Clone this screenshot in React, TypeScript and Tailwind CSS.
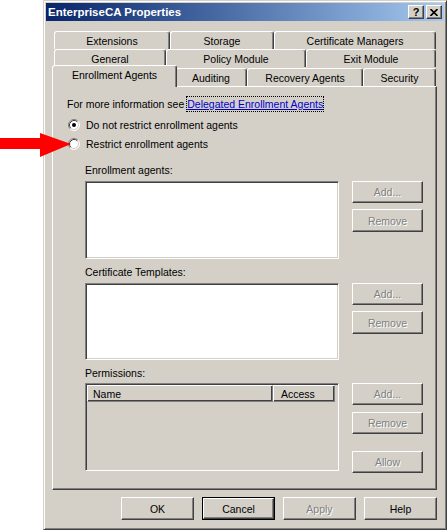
import React from "react";

const raised =
  "bg-[#d4d0c8] border border-t-white border-l-white border-r-[#404040] border-b-[#404040] shadow-[inset_-1px_-1px_0_#808080]";
const sunken =
  "border border-t-[#808080] border-l-[#808080] border-r-white border-b-white shadow-[inset_1px_1px_0_#404040,inset_-1px_-1px_0_#d4d0c8]";
const disabledText = "text-[#808080] [text-shadow:1px_1px_0_#ffffff]";

function Btn({
  children,
  disabled,
  className,
}: {
  children: React.ReactNode;
  disabled?: boolean;
  className: string;
}) {
  return (
    <div className={`${raised} ${className} flex items-center justify-center`}>
      <span className={disabled ? disabledText : "text-black"}>{children}</span>
    </div>
  );
}

function Radio({ checked }: { checked?: boolean }) {
  return (
    <svg width="12" height="12" viewBox="0 0 12 12" className="shrink-0">
      <circle cx="6" cy="6" r="5" fill="#ffffff" />
      <path d="M2.11 9.89 A5.5 5.5 0 0 1 9.89 2.11" fill="none" stroke="#808080" strokeWidth="1" />
      <path d="M9.89 2.11 A5.5 5.5 0 0 1 2.11 9.89" fill="none" stroke="#ffffff" strokeWidth="1" />
      <path d="M2.82 9.18 A4.5 4.5 0 0 1 9.18 2.82" fill="none" stroke="#404040" strokeWidth="1" />
      <path d="M9.18 2.82 A4.5 4.5 0 0 1 2.82 9.18" fill="none" stroke="#d4d0c8" strokeWidth="1" />
      {checked && <circle cx="6" cy="6" r="2" fill="#000000" />}
    </svg>
  );
}

function Tab({ className, children }: { className: string; children: React.ReactNode }) {
  return (
    <div
      className={`${className} h-[18px] flex items-center justify-center border-t border-l border-r border-t-white border-l-white border-r-[#404040] rounded-t-[3px] shadow-[inset_-1px_0_0_#808080] bg-[#d4d0c8]`}
    >
      {children}
    </div>
  );
}

export default function App() {
  return (
    <div className="relative w-[447px] h-[530px] bg-white overflow-hidden flex font-['Liberation_Sans',Arial,sans-serif] text-[10.5px] leading-[14px] text-black">
      {/* Window */}
      <div className="ml-[43px] w-[404px] h-[530px] bg-[#d4d0c8] border border-t-[#d4d0c8] border-l-[#d4d0c8] border-r-[#404040] border-b-[#404040] shadow-[inset_1px_1px_0_#ffffff,inset_-1px_-1px_0_#808080] p-[2px] flex flex-col">
        {/* Title bar */}
        <div className="h-[18px] bg-linear-to-r from-[#0a246a] to-[#a6caf0] flex items-center pl-[2px] pr-[2px]">
          <span className="text-white font-bold text-[11.5px] leading-[14px] flex-1">EnterpriseCA Properties</span>
          <div className={`${raised} w-[16px] h-[14px] flex items-center justify-center`}>
            <span className="font-bold text-[11px] leading-[11px] text-black">?</span>
          </div>
          <div className={`${raised} w-[16px] h-[14px] ml-[2px] flex items-center justify-center`}>
            <svg width="8" height="7" viewBox="0 0 8 7">
              <path d="M0.5 0 L7.5 7 M7.5 0 L0.5 7" stroke="#000" strokeWidth="1.6" />
            </svg>
          </div>
        </div>

        {/* Tabs */}
        <div className="ml-[6px] mt-[10px] w-[385px] flex flex-col">
          <div className="flex pl-[2px]">
            <Tab className="w-[116px]">Extensions</Tab>
            <Tab className="w-[104px]">Storage</Tab>
            <Tab className="w-[162px]">Certificate Managers</Tab>
          </div>
          <div className="flex pl-[2px]">
            <Tab className="w-[112px]">General</Tab>
            <Tab className="w-[140px]">Policy Module</Tab>
            <Tab className="w-[130px]">Exit Module</Tab>
          </div>
          <div className="flex items-end h-[19px]">
            <div className="relative z-10 w-[125px] h-[22px] -mr-[2px] -mb-[1px] bg-[#d4d0c8] border-t border-l border-r border-t-white border-l-white border-r-[#404040] rounded-t-[3px] shadow-[inset_-1px_0_0_#808080] flex justify-center pt-[2px]">
              Enrollment Agents
            </div>
            <Tab className="w-[72px]">Auditing</Tab>
            <Tab className="w-[116px]">Recovery Agents</Tab>
            <Tab className="w-[73px]">Security</Tab>
          </div>

          {/* Panel */}
          <div className={`${raised} w-[385px] h-[404px] flex flex-col`}>
            <div className="ml-[14px] mt-[10px] h-[14px] flex items-center">
              <span>For more information see&nbsp;</span>
              <span className="text-[#0000cc] underline outline outline-1 outline-dotted outline-black">
                Delegated Enrollment Agents
              </span>
            </div>
            <div className="ml-[15px] mt-[7px] h-[14px] flex items-center gap-[6px]">
              <Radio checked />
              <span>Do not restrict enrollment agents</span>
            </div>
            <div className="ml-[15px] mt-[5px] h-[14px] flex items-center gap-[6px]">
              <Radio />
              <span>Restrict enrollment agents</span>
            </div>

            <div className="ml-[32px] mt-[12px] h-[14px]">Enrollment agents:</div>
            <div className="ml-[32px] mt-[4px] flex">
              <div className={`${sunken} w-[254px] h-[78px] bg-white`} />
              <div className="ml-[13px] flex flex-col">
                <Btn disabled className="w-[71px] h-[22px]">Add...</Btn>
                <Btn disabled className="w-[71px] h-[23px] mt-[6px]">Remove</Btn>
              </div>
            </div>

            <div className="ml-[32px] mt-[6px] h-[14px]">Certificate Templates:</div>
            <div className="ml-[32px] mt-[4px] flex">
              <div className={`${sunken} w-[254px] h-[77px] bg-white`} />
              <div className="ml-[13px] flex flex-col">
                <Btn disabled className="w-[71px] h-[22px]">Add...</Btn>
                <Btn disabled className="w-[71px] h-[23px] mt-[6px]">Remove</Btn>
              </div>
            </div>

            <div className="ml-[32px] mt-[6px] h-[14px]">Permissions:</div>
            <div className="ml-[32px] mt-[3px] flex">
              <div className={`${sunken} w-[254px] h-[88px] bg-[#d4d0c8] p-[1px]`}>
                <div className="flex h-[17px]">
                  <div className="w-[186px] h-[17px] border border-t-white border-l-white border-r-[#808080] border-b-[#808080] shadow-[inset_-1px_-1px_0_#404040] pl-[5px] flex items-center">
                    Name
                  </div>
                  <div className="w-[62px] h-[17px] border border-t-white border-l-white border-r-[#808080] border-b-[#808080] shadow-[inset_-1px_-1px_0_#404040] pl-[7px] flex items-center">
                    Access
                  </div>
                </div>
              </div>
              <div className="ml-[13px] flex flex-col">
                <Btn disabled className="w-[71px] h-[22px]">Add...</Btn>
                <Btn disabled className="w-[71px] h-[22px] mt-[7px]">Remove</Btn>
                <Btn disabled className="w-[71px] h-[22px] mt-[17px]">Allow</Btn>
              </div>
            </div>
          </div>
        </div>

        {/* Bottom buttons */}
        <div className="mt-[7px] flex justify-end gap-[8px] pr-[7px]">
          <Btn className="w-[73px] h-[23px]">OK</Btn>
          <div className="w-[73px] h-[23px] border border-black">
            <Btn className="w-full h-full">Cancel</Btn>
          </div>
          <Btn disabled className="w-[73px] h-[23px]">Apply</Btn>
          <Btn className="w-[73px] h-[23px]">Help</Btn>
        </div>
      </div>

      {/* Red arrow annotation */}
      <svg
        className="absolute left-0 top-[133px] z-20"
        width="72"
        height="25"
        viewBox="0 0 72 25"
      >
        <polygon points="0,5 40,5 40,0 71,11 40,24 40,16 0,16" fill="#ff0000" />
      </svg>
    </div>
  );
}
